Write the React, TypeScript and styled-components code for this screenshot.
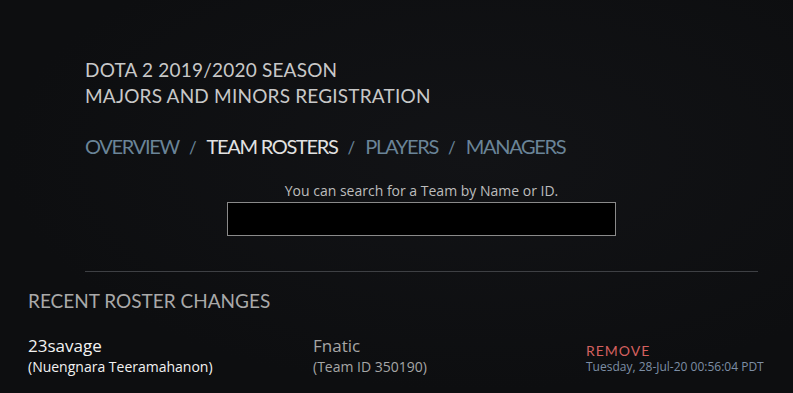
import React from "react";
import styled, { createGlobalStyle } from "styled-components";

const Global = createGlobalStyle`
  html, body { margin: 0; padding: 0; background: #0e0f11; }
  body { width: 793px; height: 393px; overflow: hidden; }
`;

const Page = styled.div`
  width: 793px;
  height: 393px;
  overflow: hidden;
  background: radial-gradient(ellipse at 60% 40%, #121316 0%, #0d0e10 70%);
  font-family: "Open Sans", "Noto Sans", sans-serif;
  box-sizing: border-box;
  padding-top: 57px;
`;

const Header = styled.div`
  padding: 0 35px 0 85px;
`;

const Title = styled.h1`
  margin: 0;
  font-family: Lato, "Noto Sans", sans-serif;
  font-weight: 400;
  font-size: 19px;
  line-height: 26px;
  color: #c8c8c8;
  letter-spacing: 0.2px;
`;

const Nav = styled.nav`
  display: flex;
  align-items: baseline;
  margin-top: 24px;
  font-family: Lato, "Noto Sans", sans-serif;
  font-size: 20px;
  line-height: 26px;
  letter-spacing: -1.3px;
`;

const NavLink = styled.span<{ $active?: boolean }>`
  color: ${(p) => (p.$active ? "#e2e2e2" : "#6a8498")};
`;

const Sep = styled.span`
  color: #6a8498;
  font-size: 17px;
  letter-spacing: 0;
  margin: 0 10px 0 10px;
`;

const Search = styled.div`
  display: flex;
  flex-direction: column;
  align-items: center;
  margin-top: 21px;
`;

const SearchLabel = styled.div`
  color: #bdbdbd;
  font-size: 14px;
  line-height: 18px;
`;

const SearchInput = styled.div`
  width: 387px;
  height: 32px;
  margin-top: 2px;
  background: #000;
  border: 1px solid #8a8a8a;
`;

const Divider = styled.hr`
  margin: 35px 0 0 0;
  border: none;
  height: 1px;
  background: #3e4044;
`;

const Recent = styled.section`
  padding: 17px 0 0 28px;
`;

const RecentTitle = styled.h2`
  margin: 0;
  font-family: Lato, "Noto Sans", sans-serif;
  font-weight: 400;
  font-size: 19px;
  line-height: 24px;
  color: #a9a9a9;
`;

const Rows = styled.div`
  display: flex;
  flex-direction: column;
  gap: 11px;
  margin-top: 22px;
`;

const Row = styled.div`
  display: grid;
  grid-template-columns: 285px 273px auto;
`;

const Cell = styled.div`
  display: flex;
  flex-direction: column;
`;

const Primary = styled.div<{ $dim?: boolean }>`
  font-size: 17px;
  line-height: 22px;
  color: ${(p) => (p.$dim ? "#a6a6a6" : "#f2f2f2")};
`;

const Secondary = styled.div<{ $dim?: boolean }>`
  font-size: 14px;
  line-height: 20px;
  color: ${(p) => (p.$dim ? "#a6a6a6" : "#f2f2f2")};
`;

const Remove = styled.div`
  margin-top: 8px;
  font-family: Lato, "Noto Sans", sans-serif;
  font-size: 14px;
  line-height: 16px;
  letter-spacing: 1px;
  color: #d4605f;
`;

const DateText = styled.div`
  font-size: 12px;
  line-height: 16px;
  color: #7d8ea5;
`;

export default function App() {
  return (
    <>
      <Global />
      <Page>
        <Header>
          <Title>
            DOTA 2 2019/2020 SEASON
            <br />
            MAJORS AND MINORS REGISTRATION
          </Title>
          <Nav>
            <NavLink>OVERVIEW</NavLink>
            <Sep>/</Sep>
            <NavLink $active>TEAM ROSTERS</NavLink>
            <Sep>/</Sep>
            <NavLink>PLAYERS</NavLink>
            <Sep>/</Sep>
            <NavLink>MANAGERS</NavLink>
          </Nav>
          <Search>
            <SearchLabel>You can search for a Team by Name or ID.</SearchLabel>
            <SearchInput />
          </Search>
          <Divider />
        </Header>
        <Recent>
          <RecentTitle>RECENT ROSTER CHANGES</RecentTitle>
          <Rows>
            <Row>
              <Cell>
                <Primary>23savage</Primary>
                <Secondary>(Nuengnara Teeramahanon)</Secondary>
              </Cell>
              <Cell>
                <Primary $dim>Fnatic</Primary>
                <Secondary $dim>(Team ID 350190)</Secondary>
              </Cell>
              <Cell>
                <Remove>REMOVE</Remove>
                <DateText>Tuesday, 28-Jul-20 00:56:04 PDT</DateText>
              </Cell>
            </Row>
            <Row>
              <Cell>
                <Primary>saksa</Primary>
              </Cell>
            </Row>
          </Rows>
        </Recent>
      </Page>
    </>
  );
}
